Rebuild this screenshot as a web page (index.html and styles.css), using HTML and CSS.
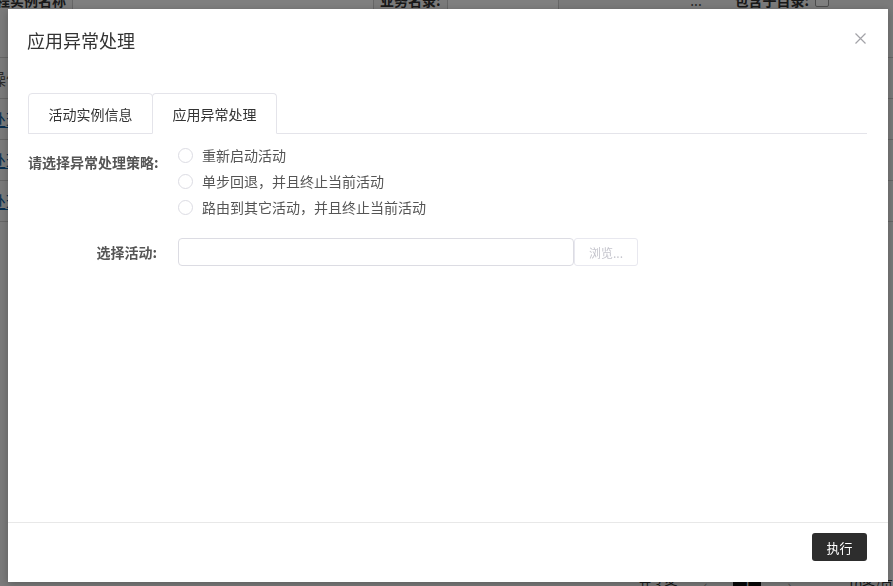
FILE: index.html
```html
<!DOCTYPE html>
<html lang="zh-CN">
<head>
    <meta charset="UTF-8">
    <title>应用异常处理</title>
    <link rel="stylesheet" href="styles.css">
</head>
<body>

    <!-- page behind the dialog -->
    <div class="page">
        <div class="search-row">
            <span class="search-label first">流程实例名称:</span>
            <span class="search-field wide"></span>
            <span class="search-label">业务名录:</span>
            <span class="search-field"></span>
            <span class="search-btn">...</span>
            <span class="search-label">包含子目录:</span>
            <span class="search-check"></span>
        </div>
        <div class="grid">
            <div class="grid-row head"><span class="cell">操作</span></div>
            <div class="grid-row"><span class="cell link">处理</span></div>
            <div class="grid-row"><span class="cell link">处理</span></div>
            <div class="grid-row"><span class="cell link">处理</span></div>
        </div>
        <div class="pager">
            <span class="pager-total">共 3 条</span>
            <span class="pager-box">‹</span>
            <span class="pager-num">1</span>
            <span class="pager-box">›</span>
            <span class="pager-size">10条/页</span>
        </div>
    </div>

    <div class="backdrop"></div>

    <div class="modal">
        <div class="modal-header">
            <span class="modal-title">应用异常处理</span>
            <span class="modal-close">
                <svg width="11" height="11" viewBox="0 0 11 11"><path d="M0.5 0.5 L10.5 10.5 M10.5 0.5 L0.5 10.5" stroke="#a3a3a8" stroke-width="1.2" fill="none"/></svg>
            </span>
        </div>

        <div class="modal-body">
            <div class="tabs">
                <a class="tab">活动实例信息</a>
                <a class="tab active">应用异常处理</a>
            </div>

            <div class="form-row">
                <label class="form-label strategy">请选择异常处理策略:</label>
                <div class="radio-list">
                    <label class="radio"><span class="radio-dot"></span>重新启动活动</label>
                    <label class="radio"><span class="radio-dot"></span>单步回退，并且终止当前活动</label>
                    <label class="radio"><span class="radio-dot"></span>路由到其它活动，并且终止当前活动</label>
                </div>
            </div>

            <div class="form-row activity">
                <label class="form-label">选择活动:</label>
                <input type="text" class="text-input">
                <button type="button" class="browse-btn" disabled>浏览...</button>
            </div>
        </div>

        <div class="modal-footer">
            <button type="button" class="run-btn">执行</button>
        </div>
    </div>

</body>
</html>
```

FILE: styles.css
```css
body {
  margin: 0;
  padding: 0;
  font-family: "Noto Sans CJK SC", "Liberation Sans", sans-serif;
  font-size: 14px;
  color: #333;
  background: #f5f5f5;
  height: 586px;
  overflow: hidden;
}

/* background page */
.page {
  height: 586px;
  display: flex;
  flex-direction: column;
}

.search-row {
  display: flex;
  align-items: center;
  height: 22px;
  margin-top: -11px;
  font-weight: bold;
  font-size: 14px;
}

.search-label {
  padding: 0 6px;
  white-space: nowrap;
}

.search-label.first {
  width: 60px;
  overflow: hidden;
  text-align: right;
  direction: rtl;
}

.search-field {
  width: 110px;
  height: 22px;
  border-left: 1px solid #ccc;
  border-right: 1px solid #ccc;
  background: #fff;
}

.search-field.wide {
  width: 300px;
}

.search-btn {
  width: 65px;
  text-align: center;
  font-weight: normal;
  color: #555;
  margin-left: 105px;
}

.search-check {
  width: 12px;
  height: 12px;
  border: 1px solid #999;
  background: #fff;
  border-radius: 2px;
}

.grid {
  margin-top: 46px;
  border-top: 1px solid #ccc;
}

.grid-row {
  height: 40px;
  border-bottom: 1px solid #ccc;
  display: flex;
  align-items: center;
}

.grid-row .cell {
  margin-left: -10px;
  font-size: 16px;
  color: #555;
}

.grid-row .cell.link {
  color: #0d5c9e;
  text-decoration: underline;
}

.pager {
  margin-top: auto;
  margin-bottom: -10px;
  display: flex;
  justify-content: flex-end;
  align-items: center;
  gap: 14px;
  height: 24px;
  font-size: 13px;
}

.pager-total {
  color: #333;
}

.pager-box {
  width: 28px;
  text-align: center;
  color: #999;
}

.pager-num {
  width: 28px;
  height: 24px;
  background: #111;
  color: #fff;
  text-align: center;
}

.pager-size {
  color: #333;
  margin-left: 30px;
}

/* overlay + dialog */
.backdrop {
  position: fixed;
  top: 0;
  left: 0;
  right: 0;
  bottom: 0;
  background: rgba(0, 0, 0, 0.5);
}

.modal {
  position: fixed;
  top: 9px;
  left: 8px;
  width: 880px;
  height: 573px;
  background: #fff;
  box-shadow: 0 2px 8px rgba(0, 0, 0, 0.25);
  display: flex;
  flex-direction: column;
}

.modal-header {
  display: flex;
  justify-content: space-between;
  align-items: center;
  padding: 19px 22px 20px 19px;
}

.modal-title {
  font-size: 18px;
  line-height: 25px;
  color: #333;
}

.modal-close {
  display: flex;
  margin-top: -5px;
}

.modal-body {
  flex: 1;
  padding: 20px 21px 0 20px;
}

.tabs {
  display: flex;
  border-bottom: 1px solid #e4e4ea;
  height: 40px;
}

.tab {
  width: 125px;
  box-sizing: border-box;
  height: 41px;
  line-height: 40px;
  text-align: center;
  color: #333;
  border: 1px solid #e4e4ea;
  border-radius: 4px 4px 0 0;
  background: #fff;
}

.tab + .tab {
  margin-left: -1px;
}

.tab.active {
  border-bottom-color: #fff;
}

.form-row {
  display: flex;
  margin-top: 8px;
}

.form-label {
  width: 129px;
  text-align: right;
  font-weight: bold;
  color: #555;
  line-height: 20px;
  margin-right: 21px;
  white-space: nowrap;
}

.form-label.strategy {
  padding-top: 10px;
}

.radio-list {
  display: flex;
  flex-direction: column;
}

.radio {
  display: flex;
  align-items: center;
  height: 26px;
  color: #555;
}

.radio-dot {
  width: 13px;
  height: 13px;
  border: 1px solid #dcdce3;
  border-radius: 50%;
  margin-right: 9px;
}

.form-row.activity {
  margin-top: 18px;
  align-items: center;
}

.text-input {
  width: 396px;
  height: 28px;
  box-sizing: border-box;
  border: 1px solid #dcdce3;
  border-radius: 4px;
  padding: 4px 8px;
  margin: 0;
}

.browse-btn {
  width: 64px;
  height: 28px;
  margin-left: 0;
  border: 1px solid #e8e8ef;
  border-radius: 3px;
  background: #fff;
  color: #c4c4cc;
  font-family: inherit;
  font-size: 12px;
}

.modal-footer {
  border-top: 1px solid #e8e8e8;
  padding: 10px 21px 21px;
  display: flex;
  justify-content: flex-end;
}

.run-btn {
  background: #2d2d2d;
  color: #fff;
  border: none;
  border-radius: 3px;
  width: 55px;
  height: 28px;
  font-family: inherit;
  font-size: 13px;
}
```
